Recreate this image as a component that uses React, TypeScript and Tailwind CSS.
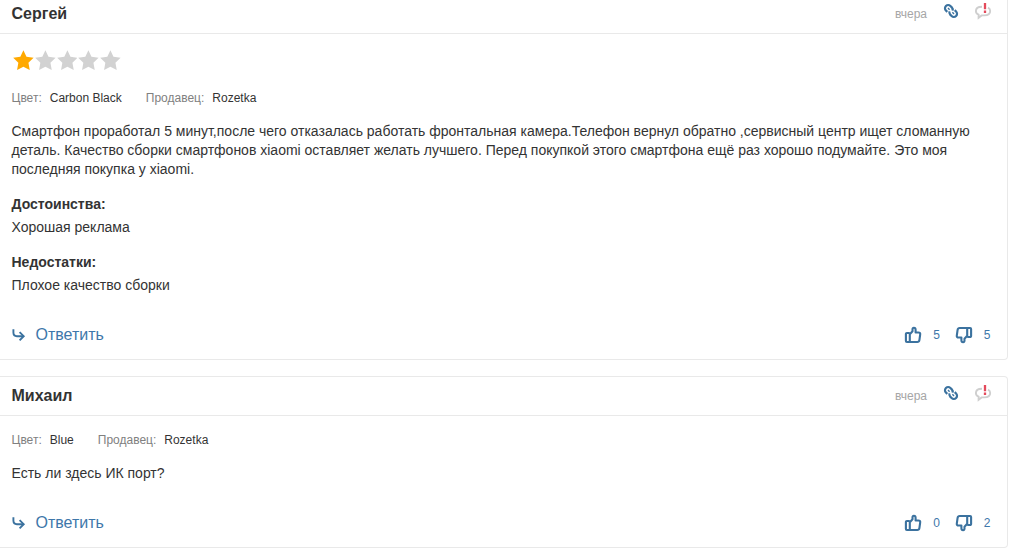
import React from 'react';

type Review = {
  author: string;
  date: string;
  rating?: number;
  color: string;
  seller: string;
  text: string[];
  pros?: string;
  cons?: string;
  likes: number;
  dislikes: number;
};

const reviews: Review[] = [
  {
    author: 'Сергей',
    date: 'вчера',
    rating: 1,
    color: 'Carbon Black',
    seller: 'Rozetka',
    text: [
      'Смартфон проработал 5 минут,после чего отказалась работать фронтальная камера.Телефон вернул обратно ,сервисный центр ищет сломанную',
      'деталь. Качество сборки смартфонов xiaomi оставляет желать лучшего. Перед покупкой этого смартфона ещё раз хорошо подумайте. Это моя',
      'последняя покупка у xiaomi.',
    ],
    pros: 'Хорошая реклама',
    cons: 'Плохое качество сборки',
    likes: 5,
    dislikes: 5,
  },
  {
    author: 'Михаил',
    date: 'вчера',
    color: 'Blue',
    seller: 'Rozetka',
    text: ['Есть ли здесь ИК порт?'],
    likes: 0,
    dislikes: 2,
  },
];

const LinkIcon = () => (
  <svg width="16" height="16" viewBox="0 0 16 16" fill="none" stroke="#3b729f" strokeWidth="2.2">
    <path d="M4.3 8.9 2.9 7.5a3.2 3.2 0 0 1 0-4.5 3.2 3.2 0 0 1 4.5 0l1.4 1.4c.9.9 1.1 2 .6 3.2" />
    <path d="m11.7 7.1 1.4 1.4a3.2 3.2 0 0 1 0 4.5 3.2 3.2 0 0 1-4.5 0l-1.4-1.4c-.9-.9-1.1-2-.6-3.2" />
    <path d="m5 5.1 1.6 1.6M9.4 9.3l1.6 1.6" strokeWidth="1.4" />
  </svg>
);

const ComplaintIcon = () => (
  <svg width="18" height="18" viewBox="0 0 18 18" fill="none">
    <path
      d="M8 4.7C4 4.7 1.9 6.5 1.9 9c0 1.7 1 3 2.7 3.7v3.1l3-2.4h2.6c3.6 0 6-1.8 6-4.4 0-1.5-.8-2.7-2.2-3.4"
      stroke="#cfcfcf"
      strokeWidth="1.9"
    />
    <path d="M11 .9v6.3M11 8.6v2.3" stroke="#e44a5b" strokeWidth="2.3" />
  </svg>
);

const ThumbIcon = ({ down }: { down?: boolean }) => (
  <svg
    width="18"
    height="18"
    viewBox="0 0 18 18"
    fill="none"
    stroke="#3b729f"
    strokeWidth="2.1"
    strokeLinejoin="round"
    className={down ? 'rotate-180' : ''}
  >
    <path d="M5.8 7H2.9c-.6 0-1 .4-1 1v7c0 .6.4 1 1 1h2.9" />
    <path d="M5.8 8.2 8.5 5.3V3.4c0-1 .5-1.6 1.4-1.6 1.1 0 1.7.8 1.7 1.9v2.8h2.9c1.2 0 1.9.8 1.7 1.9l-.8 5.7c-.2 1.2-.9 1.9-2.1 1.9H5.8Z" />
  </svg>
);

const ReplyIcon = () => (
  <svg width="14" height="14" viewBox="0 0 14 14" fill="none" stroke="#3b729f" strokeWidth="1.9">
    <path d="M1.4 1.2v3.4c0 2.4 1.2 3.6 3.5 3.6h6.5" />
    <path d="m7.6 4.1 4.1 4.1-4.1 4.2" />
  </svg>
);

const Stars = ({ rating }: { rating: number }) => (
  <div className="mb-[18px] -mt-0.5 flex h-6 items-center gap-px pl-[1.5px]">
    {[1, 2, 3, 4, 5].map((n) => (
      <svg key={n} width="20.8" height="21" viewBox="0 0 21 21" fill={n <= rating ? '#ffa900' : '#d2d2d2'}>
        <path d="m10.5.2 3.1 6.5 7.2 1-5.2 5 1.3 7.5-6.4-3.4-6.4 3.4 1.3-7.5-5.2-5 7.2-1Z" />
      </svg>
    ))}
  </div>
);

const Attribute = ({ label, value }: { label: string; value: string }) => (
  <div className="flex gap-2">
    <span className="text-[#808080]">{label}:</span>
    <span>{value}</span>
  </div>
);

const Note = ({ title, children }: { title: string; children?: React.ReactNode }) => (
  <div className="mt-4">
    <h4 className="mb-1 font-bold">{title}:</h4>
    <p>{children}</p>
  </div>
);

const ReviewCard = ({ review }: { review: Review }) => (
  <article className="rounded-r-[4px] border border-l-0 border-[#e9e9e9] bg-white">
    <header className="flex h-[39px] items-center justify-between border-b border-[#e9e9e9] pr-[15px] pl-[11.5px]">
      <h3 className="text-base font-bold">{review.author}</h3>
      <div className="flex items-center">
        <time className="mr-4 text-xs text-[#a6a6a6]">{review.date}</time>
        <button className="mr-[15px] mb-1.5">
          <LinkIcon />
        </button>
        <button className="mb-1.5">
          <ComplaintIcon />
        </button>
      </div>
    </header>

    <div className="pt-4 pr-[16.5px] pb-3 pl-[11.5px] text-sm leading-[19px]">
      {review.rating && <Stars rating={review.rating} />}
      <div className="mb-4 flex gap-6 text-xs leading-4">
        <Attribute label="Цвет" value={review.color} />
        <Attribute label="Продавец" value={review.seller} />
      </div>
      {review.text.map((line) => (
        <p key={line} className="whitespace-nowrap">{line}</p>
      ))}
      {review.pros && <Note title="Достоинства">{review.pros}</Note>}
      {review.cons && <Note title="Недостатки">{review.cons}</Note>}

      <footer className="mt-7 flex h-6 items-center justify-between text-[#3e77aa]">
        <button className="flex items-center gap-[10px] text-base">
          <ReplyIcon />
          Ответить
        </button>
        <div className="flex items-center text-xs">
          <button className="flex items-center gap-[11px]">
            <ThumbIcon />
            <span>{review.likes}</span>
          </button>
          <button className="ml-[15px] flex items-center gap-[11px]">
            <ThumbIcon down />
            <span>{review.dislikes}</span>
          </button>
        </div>
      </footer>
    </div>
  </article>
);

export default function App() {
  return (
    <main className="h-screen overflow-hidden bg-white font-['Liberation_Sans',Arial,sans-serif] text-[#333]">
      <div className="-mt-1.5 flex w-[1008px] flex-col gap-4">
        {reviews.map((review) => (
          <ReviewCard key={review.author} review={review} />
        ))}
      </div>
    </main>
  );
}
